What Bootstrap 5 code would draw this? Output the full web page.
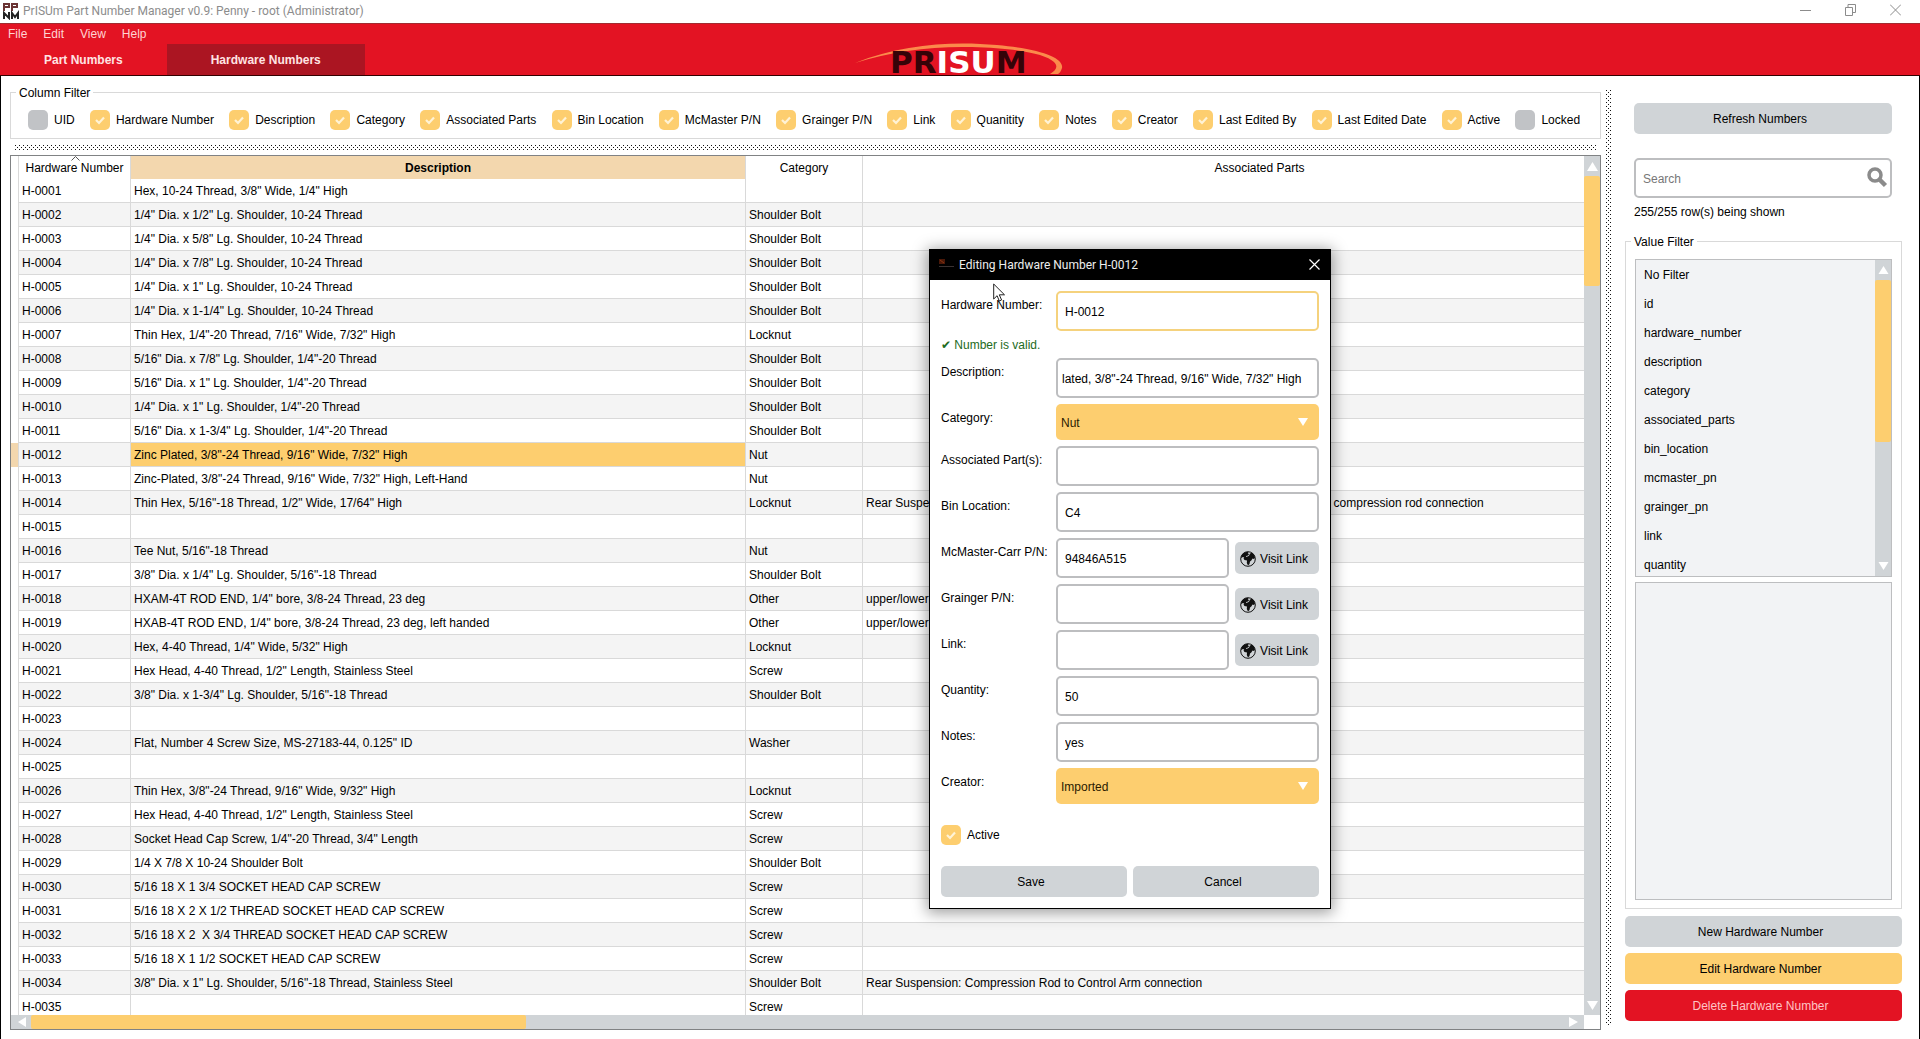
<!DOCTYPE html>
<html lang="en">
<head>
<meta charset="utf-8">
<meta name="viewport" content="width=device-width, initial-scale=1">
<title>PrISUm Part Number Manager</title>
<link href="https://cdn.jsdelivr.net/npm/bootstrap@5.3.0/dist/css/bootstrap.min.css" rel="stylesheet">
<style>
:root{--brand:#e31323;--amber:#fdce6f;--steel:#d0d4d7;--line:#d9d9d9;--edge:#bdbec0}
body{font:12px/16px "Liberation Sans",Arial,sans-serif;color:#000;background:#fff;overflow:hidden}
.caption-font{font-family:Roboto,"Open Sans",sans-serif}
.app-title{height:23px;color:#8c8c8c;padding:0 19px 0 3px}
.win-ctl{border:0;background:none;padding:0;color:#8c8c8c;line-height:0}
.app-title .win-ctl{padding-bottom:3px}
.app-head{background:var(--brand);border-bottom:1px solid #300}
.app-head::before{content:"";position:absolute;left:0;right:0;top:0;height:1px;background:#a02c30}
.menu-item{color:#ffd3d3;padding:3px 8px 2px;text-decoration:none}
.tab-item{border:0;border-radius:0;background:none;color:#ffe3e3;font-weight:700;font-size:12px;line-height:16px;padding:8px 44px 7px}
.tab-item.active{background:#ab1522;color:#ffe3e3}
.brand-logo{position:absolute;left:852px;bottom:0;overflow:visible}
.work{border:solid #000;border-width:0 1px;padding-left:9px;padding-right:17px}
.shrinkable{min-width:0;min-height:0}
fieldset.frame{border:1px solid var(--line);min-width:0}
fieldset.frame legend{float:none;width:auto;font-size:12px;line-height:16px;padding:1px 3px 0}
.col-filter{padding:0 20px 8px 17px;margin-bottom:6px}
.col-filter legend{margin:0 0 9px -12px}
.tick{appearance:none;width:20px;height:20px;border-radius:5px;background:#c1c3c6;margin:0;flex:none}
.tick:checked{background:var(--amber) url("data:image/svg+xml,%3Csvg xmlns='http://www.w3.org/2000/svg' viewBox='0 0 20 20'%3E%3Cpath d='M6 10l3 3L14 7.500' fill='none' stroke='%23fff3d6' stroke-width='2.2'/%3E%3C/svg%3E") center/20px}
.tick-label{gap:6px;cursor:default}
.dither{background:conic-gradient(at 1px 1px,transparent 270deg,#111 0) 0 0/4px 4px,conic-gradient(at 1px 1px,transparent 270deg,#111 0) 2px 2px/4px 4px}
.dither-h{height:6px;margin:0 4px 4px 5px}
.dither-v{width:5px;margin:14px 14px 14px 5px}
.left-pane{padding:8px 0 9px}
.grid-frame{border:1px solid #808284;min-height:0}
.grid-view{overflow:hidden;min-width:0;min-height:0}
.parts{table-layout:fixed;width:1646px;border-collapse:separate;border-spacing:0}
.parts .c-row{width:8px}.parts .c-num{width:112px}.parts .c-desc{width:615px}.parts .c-cat{width:117px}
.parts thead th{height:23px;font-weight:400;text-align:center;padding:2px 0 0;border-right:1px solid var(--line);position:relative}
.parts thead .sorted-col{font-weight:700;background:#f3d7ae}
.parts tbody td,.parts tbody th{height:24px;padding:2px 3px 0;white-space:pre;border-right:1px solid var(--line)}
.parts tbody th{padding:0}
.parts tbody td{border-bottom:1px solid var(--line)}
.parts tbody tr:nth-child(even) td{background:#f4f4f4}
.parts tbody tr.picked th{background:#f3d7ae}
.parts tbody tr.picked td.cell-on{background:var(--amber)}
.sort-mark{position:absolute;left:52px;top:0}
.bar{background:var(--steel)}
.bar i{background:var(--amber);border-radius:2px}
.bar svg{flex:none}
.bar-v{width:16px;flex:none}.bar-v svg{margin:4px 0 2px}
.bar-h{height:14px;margin-right:16px}
.bar-h svg{margin:0 4px 0 4px}
.grid-thumb-v{height:110px}.grid-thumb-h{width:495px}
.list-thumb{height:162px}
.side{width:277px;padding:27px 0 18px;flex:none}
.side-top{padding:0 10px 0 9px}
.push{border:0;border-radius:5px;background:var(--steel);height:31px;padding:1px 6px 0 0;font-size:12px;line-height:16px;color:#000}
.push:hover{background:var(--edge);color:#000}
.push-amber{background:var(--amber)}
.push-red{background:var(--brand);color:#ffc4c6}
.field{height:40px;border:2px solid var(--edge);border-radius:5px;font-size:12px;line-height:16px;padding:2px 7px 0;color:#000}
.field-valid{border-color:#f5d27d}
.field-scrolled{padding-left:4px}
.search-box{margin:24px 0 6px}
.search-box .field{padding:2px 32px 0 7px}
.search-box .field::placeholder{color:#777}
.search-box svg{position:absolute;right:4px;top:8px}
.value-filter{padding:0 9px 8px;margin-top:13px;margin-bottom:7px;flex:1;min-height:0}
.value-filter legend{margin:0 0 9px -4px}
.vf-panel{border:1px solid var(--edge);background:#f2f3f5;flex:1 1 0;min-height:0;overflow:hidden}
.vf-list{overflow:hidden}
.vf-list li{height:29px;flex:none;padding:7px 8px 6px;background:none;border:0;color:#000}
.dialog{position:absolute;left:929px;top:249px;width:402px;border:1px solid #000;background:#fff;box-shadow:0 2px 14px 2px rgba(0,0,0,.38)}
.dialog-title{background:#000;color:#eee;height:30px;padding:0 10px 0 9px}
.dialog-body{padding:11px 11px 11px}
.form-line{display:flex;margin-bottom:6px}
.form-line>label{width:115px;flex:none;padding-top:6px;white-space:nowrap}
.valid-note{color:#1d6b22;height:15px;line-height:17px;margin-bottom:6px}
.drop{height:36px;border:0;border-radius:5px;font-size:12px;padding:1px 30px 0 5px;color:#2a1a00;background:var(--amber) url("data:image/svg+xml,%3Csvg xmlns='http://www.w3.org/2000/svg' viewBox='0 0 10 8'%3E%3Cpath d='M0 0h10L5 8z' fill='%23fff'/%3E%3C/svg%3E") no-repeat right 11px center/10px 8px}
.visit{width:84px;height:32px;flex:none;align-self:center;margin-left:6px}
.gap-row{gap:6px}
.active-line{margin:21px 0}
.pointer{position:absolute;left:993px;top:283px}
</style>
</head>
<body class="d-flex flex-column vh-100">

<header class="app-title d-flex align-items-center caption-font">
  <svg class="me-1" width="16" height="18" viewBox="0 0 16 18"><path d="M1 9V2h5v3H1M9 9V2h5v3H9" fill="none" stroke="#6b3434" stroke-width="2"/><path d="M1 17v-6l5 5v-6M9 17v-6l3 4 3-4v6" fill="none" stroke="#222" stroke-width="2"/></svg>
  <span>PrISUm Part Number Manager v0.9: Penny - root (Administrator)</span>
  <div class="ms-auto d-flex align-items-center" style="gap:34px">
    <button class="win-ctl" aria-label="Minimize"><svg width="11" height="12"><path d="M0 6.500h11" stroke="currentColor"/></svg></button>
    <button class="win-ctl" aria-label="Restore"><svg width="11" height="12" fill="none" stroke="currentColor"><path d="M.5 3.500h7v8h-7zM3 3V.5h7.500v8H8"/></svg></button>
    <button class="win-ctl" aria-label="Close"><svg width="11" height="12" stroke="currentColor"><path d="M0 .5l11 11M11 .5L0 11.500"/></svg></button>
  </div>
</header>

<div class="app-head position-relative">
  <nav class="d-flex"><a class="menu-item" href="#">File</a><a class="menu-item" href="#">Edit</a><a class="menu-item" href="#">View</a><a class="menu-item" href="#">Help</a></nav>
  <div class="d-flex" role="tablist">
    <button class="tab-item" role="tab">Part Numbers</button><button class="tab-item active" role="tab">Hardware Numbers</button>
  </div>
  <svg class="brand-logo" width="214" height="34" viewBox="0 0 214 34" role="img" aria-label="PRISUM">
    <path d="M3 22C50 3 100 0 145 4c45 4 67 13 65 23-1 3-2 5-4 6h-8c7-4 8-8 4-12C193 12 160 7 120 6 80 5 40 10 3 22z" fill="#fb8a4b"/>
    <text x="38" y="32" font-family="DejaVu Sans" font-weight="700" font-size="31" fill="#350308">PR<tspan fill="#fff">ISU</tspan>M</text>
  </svg>
</div>

<main class="work d-flex flex-grow-1 shrinkable">
  <section class="left-pane d-flex flex-column flex-grow-1 shrinkable">
    <fieldset class="frame col-filter">
      <legend>Column Filter</legend>
      <div class="d-flex justify-content-between">
        <label class="tick-label d-flex align-items-center"><input class="tick" type="checkbox">UID</label>
        <label class="tick-label d-flex align-items-center"><input class="tick" type="checkbox" checked>Hardware Number</label>
        <label class="tick-label d-flex align-items-center"><input class="tick" type="checkbox" checked>Description</label>
        <label class="tick-label d-flex align-items-center"><input class="tick" type="checkbox" checked>Category</label>
        <label class="tick-label d-flex align-items-center"><input class="tick" type="checkbox" checked>Associated Parts</label>
        <label class="tick-label d-flex align-items-center"><input class="tick" type="checkbox" checked>Bin Location</label>
        <label class="tick-label d-flex align-items-center"><input class="tick" type="checkbox" checked>McMaster P/N</label>
        <label class="tick-label d-flex align-items-center"><input class="tick" type="checkbox" checked>Grainger P/N</label>
        <label class="tick-label d-flex align-items-center"><input class="tick" type="checkbox" checked>Link</label>
        <label class="tick-label d-flex align-items-center"><input class="tick" type="checkbox" checked>Quanitity</label>
        <label class="tick-label d-flex align-items-center"><input class="tick" type="checkbox" checked>Notes</label>
        <label class="tick-label d-flex align-items-center"><input class="tick" type="checkbox" checked>Creator</label>
        <label class="tick-label d-flex align-items-center"><input class="tick" type="checkbox" checked>Last Edited By</label>
        <label class="tick-label d-flex align-items-center"><input class="tick" type="checkbox" checked>Last Edited Date</label>
        <label class="tick-label d-flex align-items-center"><input class="tick" type="checkbox" checked>Active</label>
        <label class="tick-label d-flex align-items-center"><input class="tick" type="checkbox">Locked</label>
      </div>
    </fieldset>
    <div class="dither dither-h"></div>
    <div class="grid-frame d-flex flex-column flex-grow-1">
      <div class="d-flex flex-grow-1 shrinkable">
        <div class="grid-view flex-grow-1">
          <table class="parts">
            <colgroup><col class="c-row"><col class="c-num"><col class="c-desc"><col class="c-cat"><col></colgroup>
            <thead><tr><th></th><th>Hardware Number<svg class="sort-mark" width="9" height="5" fill="none" stroke="#555"><path d="M.5 4.500l4-4 4 4"/></svg></th><th class="sorted-col">Description</th><th>Category</th><th>Associated Parts</th></tr></thead>
            <tbody>
<tr><th></th><td>H-0001</td><td>Hex, 10-24 Thread, 3/8" Wide, 1/4" High</td><td></td><td></td></tr>
<tr><th></th><td>H-0002</td><td>1/4" Dia. x 1/2" Lg. Shoulder, 10-24 Thread</td><td>Shoulder Bolt</td><td></td></tr>
<tr><th></th><td>H-0003</td><td>1/4" Dia. x 5/8" Lg. Shoulder, 10-24 Thread</td><td>Shoulder Bolt</td><td></td></tr>
<tr><th></th><td>H-0004</td><td>1/4" Dia. x 7/8" Lg. Shoulder, 10-24 Thread</td><td>Shoulder Bolt</td><td></td></tr>
<tr><th></th><td>H-0005</td><td>1/4" Dia. x 1" Lg. Shoulder, 10-24 Thread</td><td>Shoulder Bolt</td><td></td></tr>
<tr><th></th><td>H-0006</td><td>1/4" Dia. x 1-1/4" Lg. Shoulder, 10-24 Thread</td><td>Shoulder Bolt</td><td></td></tr>
<tr><th></th><td>H-0007</td><td>Thin Hex, 1/4"-20 Thread, 7/16" Wide, 7/32" High</td><td>Locknut</td><td></td></tr>
<tr><th></th><td>H-0008</td><td>5/16" Dia. x 7/8" Lg. Shoulder, 1/4"-20 Thread</td><td>Shoulder Bolt</td><td></td></tr>
<tr><th></th><td>H-0009</td><td>5/16" Dia. x 1" Lg. Shoulder, 1/4"-20 Thread</td><td>Shoulder Bolt</td><td></td></tr>
<tr><th></th><td>H-0010</td><td>1/4" Dia. x 1" Lg. Shoulder, 1/4"-20 Thread</td><td>Shoulder Bolt</td><td></td></tr>
<tr><th></th><td>H-0011</td><td>5/16" Dia. x 1-3/4" Lg. Shoulder, 1/4"-20 Thread</td><td>Shoulder Bolt</td><td></td></tr>
<tr class="picked"><th></th><td>H-0012</td><td class="cell-on">Zinc Plated, 3/8"-24 Thread, 9/16" Wide, 7/32" High</td><td>Nut</td><td></td></tr>
<tr><th></th><td>H-0013</td><td>Zinc-Plated, 3/8"-24 Thread, 9/16" Wide, 7/32" High, Left-Hand</td><td>Nut</td><td></td></tr>
<tr><th></th><td>H-0014</td><td>Thin Hex, 5/16"-18 Thread, 1/2" Wide, 17/64" High</td><td>Locknut</td><td>Rear Suspension: Compression Rod to Control Arm connection, control arm or upper to compression rod connection</td></tr>
<tr><th></th><td>H-0015</td><td></td><td></td><td></td></tr>
<tr><th></th><td>H-0016</td><td>Tee Nut, 5/16"-18 Thread</td><td>Nut</td><td></td></tr>
<tr><th></th><td>H-0017</td><td>3/8" Dia. x 1/4" Lg. Shoulder, 5/16"-18 Thread</td><td>Shoulder Bolt</td><td></td></tr>
<tr><th></th><td>H-0018</td><td>HXAM-4T ROD END, 1/4" bore, 3/8-24 Thread, 23 deg</td><td>Other</td><td>upper/lower control arm</td></tr>
<tr><th></th><td>H-0019</td><td>HXAB-4T ROD END, 1/4" bore, 3/8-24 Thread, 23 deg, left handed</td><td>Other</td><td>upper/lower control arm</td></tr>
<tr><th></th><td>H-0020</td><td>Hex, 4-40 Thread, 1/4" Wide, 5/32" High</td><td>Locknut</td><td></td></tr>
<tr><th></th><td>H-0021</td><td>Hex Head, 4-40 Thread, 1/2" Length, Stainless Steel</td><td>Screw</td><td></td></tr>
<tr><th></th><td>H-0022</td><td>3/8" Dia. x 1-3/4" Lg. Shoulder, 5/16"-18 Thread</td><td>Shoulder Bolt</td><td></td></tr>
<tr><th></th><td>H-0023</td><td></td><td></td><td></td></tr>
<tr><th></th><td>H-0024</td><td>Flat, Number 4 Screw Size, MS-27183-44, 0.125" ID</td><td>Washer</td><td></td></tr>
<tr><th></th><td>H-0025</td><td></td><td></td><td></td></tr>
<tr><th></th><td>H-0026</td><td>Thin Hex, 3/8"-24 Thread, 9/16" Wide, 9/32" High</td><td>Locknut</td><td></td></tr>
<tr><th></th><td>H-0027</td><td>Hex Head, 4-40 Thread, 1/2" Length, Stainless Steel</td><td>Screw</td><td></td></tr>
<tr><th></th><td>H-0028</td><td>Socket Head Cap Screw, 1/4"-20 Thread, 3/4" Length</td><td>Screw</td><td></td></tr>
<tr><th></th><td>H-0029</td><td>1/4 X 7/8 X 10-24 Shoulder Bolt</td><td>Shoulder Bolt</td><td></td></tr>
<tr><th></th><td>H-0030</td><td>5/16 18 X 1 3/4 SOCKET HEAD CAP SCREW</td><td>Screw</td><td></td></tr>
<tr><th></th><td>H-0031</td><td>5/16 18 X 2 X 1/2 THREAD SOCKET HEAD CAP SCREW</td><td>Screw</td><td></td></tr>
<tr><th></th><td>H-0032</td><td>5/16 18 X 2  X 3/4 THREAD SOCKET HEAD CAP SCREW</td><td>Screw</td><td></td></tr>
<tr><th></th><td>H-0033</td><td>5/16 18 X 1 1/2 SOCKET HEAD CAP SCREW</td><td>Screw</td><td></td></tr>
<tr><th></th><td>H-0034</td><td>3/8" Dia. x 1" Lg. Shoulder, 5/16"-18 Thread, Stainless Steel</td><td>Shoulder Bolt</td><td>Rear Suspension: Compression Rod to Control Arm connection</td></tr>
<tr><th></th><td>H-0035</td><td></td><td>Screw</td><td></td></tr>
            </tbody>
          </table>
        </div>
        <div class="bar bar-v d-flex flex-column align-items-center">
          <svg width="11" height="14"><path d="M5.500 2l5.500 9H0z" fill="#fff"/></svg>
          <i class="grid-thumb-v w-100"></i>
          <svg class="mt-auto" width="11" height="14"><path d="M5.500 11L0 2h11z" fill="#fff"/></svg>
        </div>
      </div>
      <div class="bar bar-h d-flex align-items-center">
        <svg width="12" height="12"><path d="M3 6l8-5v10z" fill="#fff"/></svg>
        <i class="grid-thumb-h h-100"></i>
        <svg class="ms-auto" width="12" height="12"><path d="M10 6L1 1v10z" fill="#fff"/></svg>
      </div>
    </div>
  </section>

  <div class="dither dither-v"></div>

  <aside class="side d-flex flex-column">
    <div class="side-top">
      <button class="btn push w-100 d-block">Refresh Numbers</button>
      <div class="search-box position-relative">
        <input class="form-control field" type="search" placeholder="Search" aria-label="Search">
        <svg width="22" height="22" viewBox="0 0 22 22" fill="none" stroke="#8b8b8b"><circle cx="9" cy="9" r="6" stroke-width="3.500"/><path d="M13 13l6.500 6.500" stroke-width="4.500"/></svg>
      </div>
      <div>255/255 row(s) being shown</div>
    </div>
    <fieldset class="frame value-filter d-flex flex-column">
      <legend>Value Filter</legend>
      <div class="d-flex flex-column flex-grow-1 shrinkable" style="gap:5px">
        <div class="vf-panel d-flex">
          <ul class="vf-list list-group list-group-flush flex-grow-1">
            <li class="list-group-item">No Filter</li><li class="list-group-item">id</li><li class="list-group-item">hardware_number</li><li class="list-group-item">description</li><li class="list-group-item">category</li><li class="list-group-item">associated_parts</li><li class="list-group-item">bin_location</li><li class="list-group-item">mcmaster_pn</li><li class="list-group-item">grainger_pn</li><li class="list-group-item">link</li><li class="list-group-item">quantity</li>
          </ul>
          <div class="bar bar-v d-flex flex-column align-items-center">
            <svg width="11" height="14"><path d="M5.500 2l5 8h-10z" fill="#fff"/></svg>
            <i class="list-thumb w-100"></i>
            <svg class="mt-auto" width="11" height="14"><path d="M5.500 10l-5-8h10z" fill="#fff"/></svg>
          </div>
        </div>
        <div class="vf-panel"></div>
      </div>
    </fieldset>
    <div class="d-flex flex-column gap-row">
      <button class="btn push">New Hardware Number</button>
      <button class="btn push push-amber">Edit Hardware Number</button>
      <button class="btn push push-red">Delete Hardware Number</button>
    </div>
  </aside>
</main>

<svg width="0" height="0" class="position-absolute"><symbol id="globe" viewBox="0 0 16 16"><circle cx="8" cy="8" r="7.300" fill="none" stroke="#111" stroke-width="1"/><path d="M3 2.500C5 1 7 .8 8.500 1L7.800 2.500l1.400.6L8 4.500 6.200 5 6 6.500l-1.500.3L3 6 1 7C1.200 5 2 3.500 3 2.500zM7 5.800L9 4.800l1-2.300 2-.8c1.800 1.200 2.900 3 3 5.300l-1.500 1-1-.5-1.200 2-1.300 1-.5 2.500-1.500 1.500-1.200-2.500.2-2.500-2.500-.5-1-1.500L4.500 6.500z" fill="#111"/></symbol></svg>

<div class="dialog" role="dialog" aria-label="Editing Hardware Number H-0012">
  <div class="dialog-title d-flex align-items-center caption-font">
    <svg width="16" height="12"><path d="M0 0h6v5H0z" fill="#4a1808"/><path d="M1 1l4 3" stroke="#8a3410"/><path d="M0 7.500h15" stroke="#3a3232"/></svg>
    <span class="ms-1">Editing Hardware Number H-0012</span>
    <button class="win-ctl ms-auto" aria-label="Close dialog"><svg width="11" height="12" stroke="#fff" stroke-width="1.200"><path d="M.5 .5l10 10M10.500 .5l-10 10"/></svg></button>
  </div>
  <form class="dialog-body">
    <div class="form-line"><label for="hn">Hardware Number:</label><input id="hn" class="form-control field field-valid" value="H-0012"></div>
    <div class="valid-note">✔ Number is valid.</div>
    <div class="form-line"><label for="ds">Description:</label><input id="ds" class="form-control field field-scrolled" value="lated, 3/8&quot;-24 Thread, 9/16&quot; Wide, 7/32&quot; High"></div>
    <div class="form-line"><label for="ct">Category:</label><select id="ct" class="form-select drop"><option>Nut</option></select></div>
    <div class="form-line"><label for="ap">Associated Part(s):</label><input id="ap" class="form-control field"></div>
    <div class="form-line"><label for="bl">Bin Location:</label><input id="bl" class="form-control field" value="C4"></div>
    <div class="form-line"><label for="mc">McMaster-Carr P/N:</label><input id="mc" class="form-control field" value="94846A515"><button type="button" class="btn push visit d-flex align-items-center justify-content-center"><svg class="me-1" width="16" height="16"><use href="#globe"/></svg>Visit Link</button></div>
    <div class="form-line"><label for="gr">Grainger P/N:</label><input id="gr" class="form-control field"><button type="button" class="btn push visit d-flex align-items-center justify-content-center"><svg class="me-1" width="16" height="16"><use href="#globe"/></svg>Visit Link</button></div>
    <div class="form-line"><label for="lk">Link:</label><input id="lk" class="form-control field"><button type="button" class="btn push visit d-flex align-items-center justify-content-center"><svg class="me-1" width="16" height="16"><use href="#globe"/></svg>Visit Link</button></div>
    <div class="form-line"><label for="qt">Quantity:</label><input id="qt" class="form-control field" value="50"></div>
    <div class="form-line"><label for="nt">Notes:</label><input id="nt" class="form-control field" value="yes"></div>
    <div class="form-line"><label for="cr">Creator:</label><select id="cr" class="form-select drop"><option>Imported</option></select></div>
    <label class="tick-label active-line d-flex align-items-center"><input class="tick" type="checkbox" checked>Active</label>
    <div class="d-flex gap-row"><button type="button" class="btn push flex-fill w-50">Save</button><button type="button" class="btn push flex-fill w-50">Cancel</button></div>
  </form>
</div>
<svg class="pointer" width="14" height="20" viewBox="0 0 14 20"><path d="M.7 1v15l3.400-3.300 2.200 5.300 2.300-1-2.300-5.200h5.200z" fill="#fff" stroke="#222"/></svg>

<script src="https://cdn.jsdelivr.net/npm/bootstrap@5.3.0/dist/js/bootstrap.bundle.min.js"></script>
</body>
</html>
